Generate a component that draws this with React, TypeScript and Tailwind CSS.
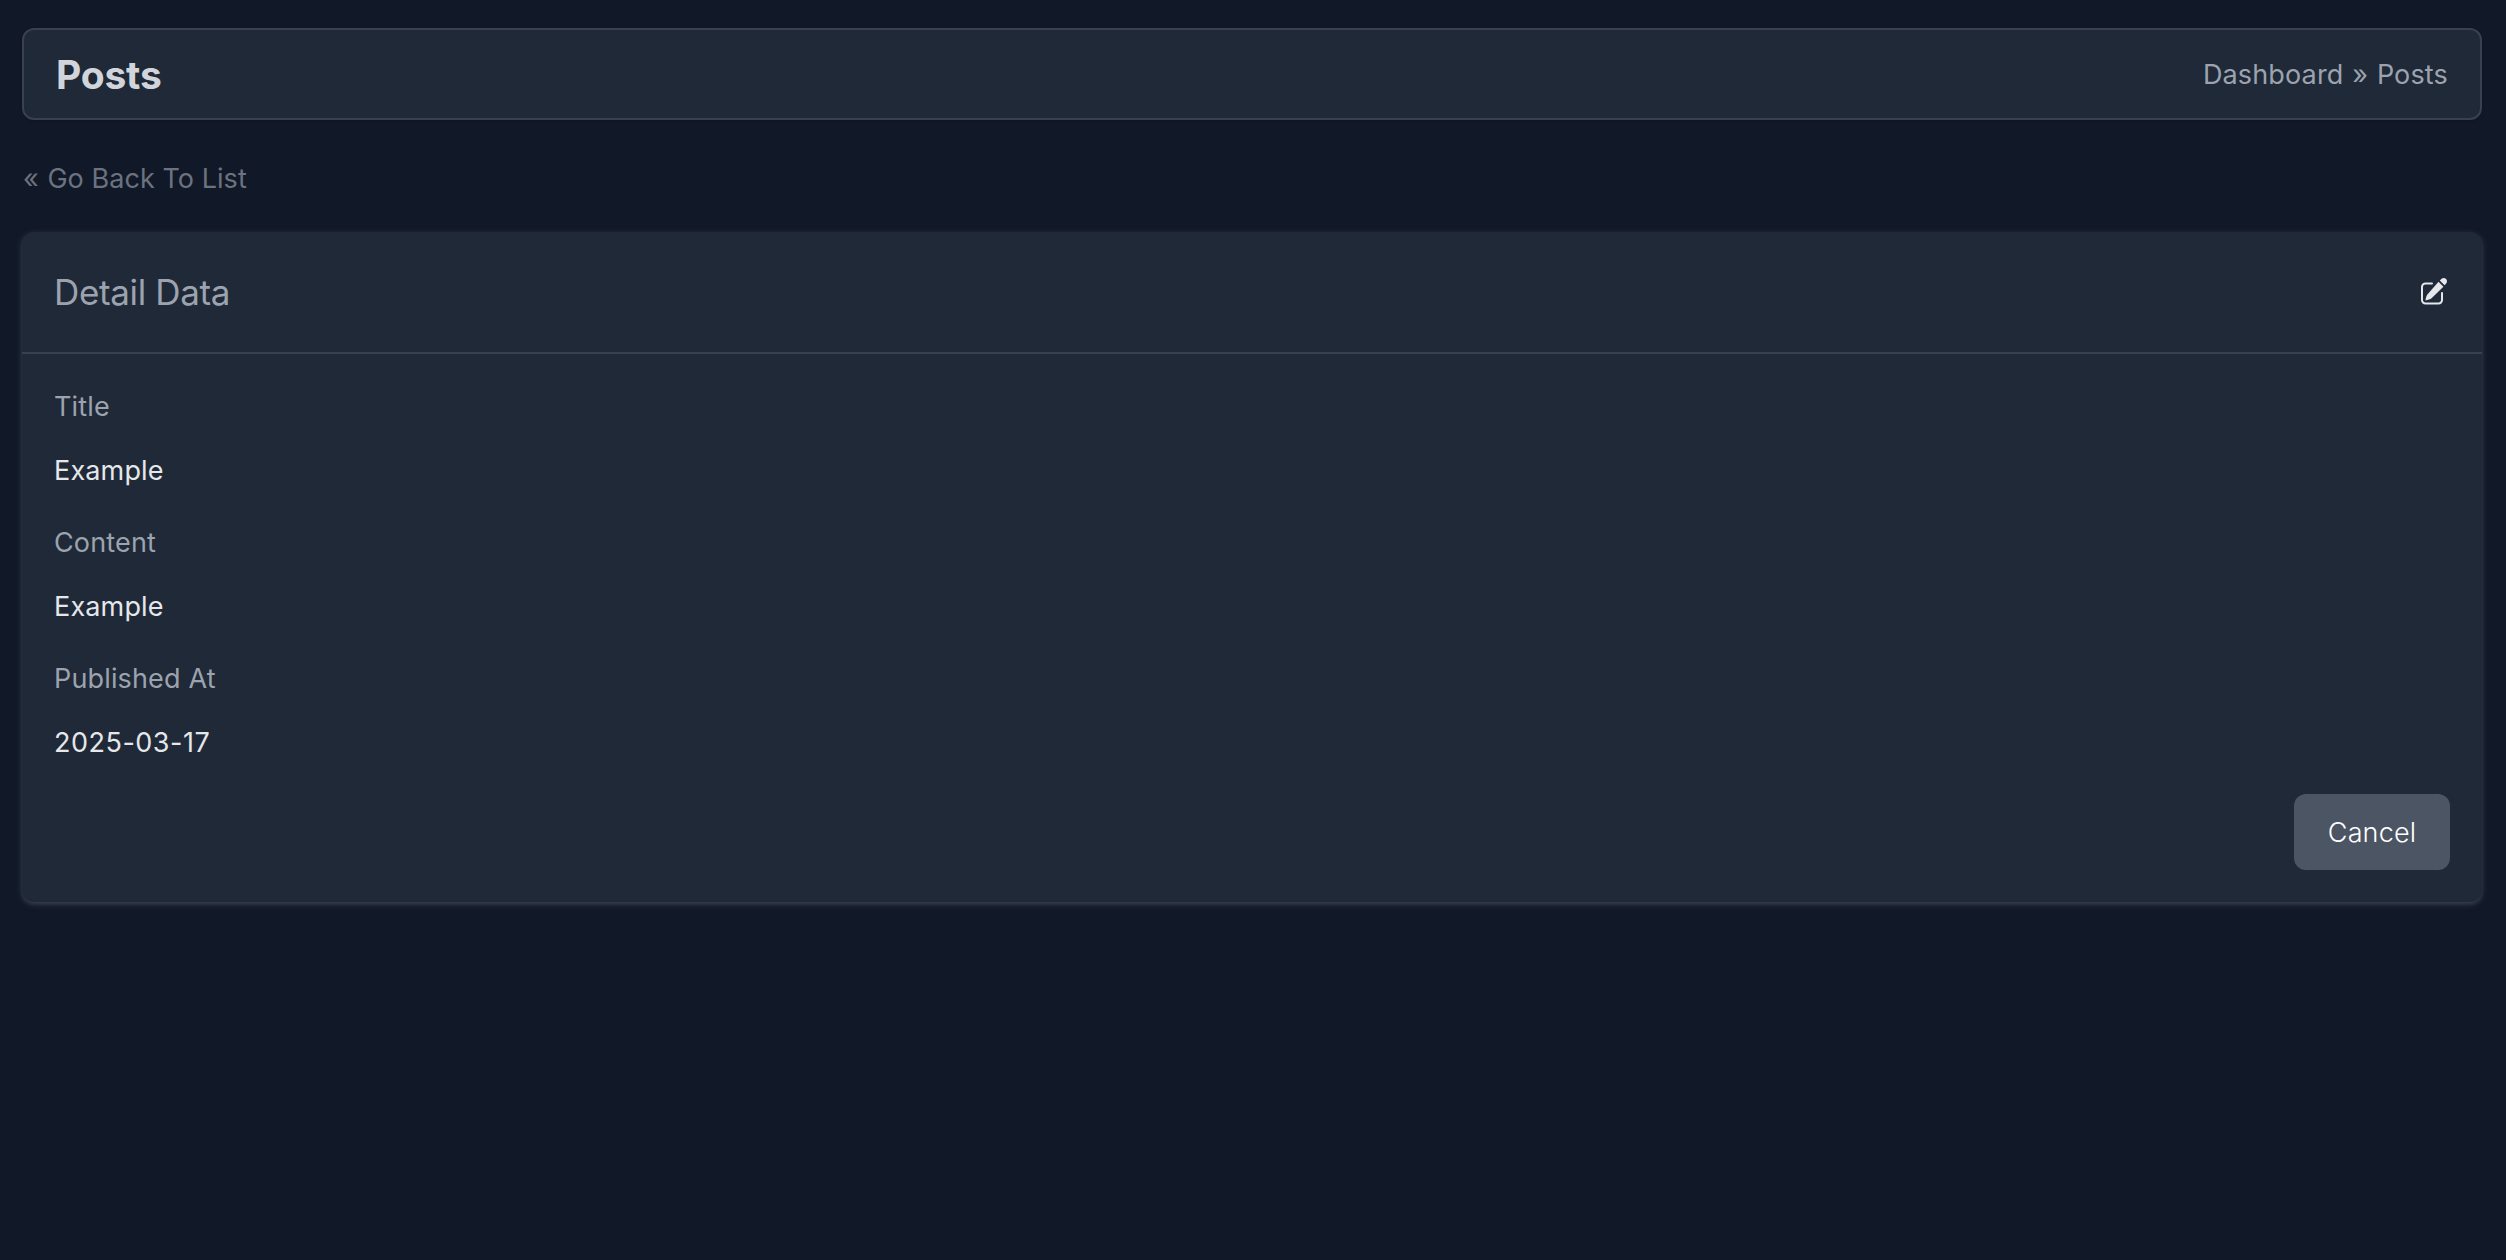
type DetailFieldProps = {
  label: string;
  value: string;
  numeric?: boolean;
};

const fields: DetailFieldProps[] = [
  { label: "Title", value: "Example" },
  { label: "Content", value: "Example" },
  { label: "Published At", value: "2025-03-17", numeric: true },
];

export default function App() {
  return (
    <div className="min-h-screen bg-[#111827] pt-7 pr-6 pl-[22px] font-['Inter',sans-serif] text-[27px] leading-10 tracking-[0.15px]">
      <header className="flex h-[92px] items-center justify-between rounded-xl border-2 border-[#374151] bg-[#1f2937] px-8 pt-0.5 shadow-sm">
        <h1 className="text-[39px] font-bold tracking-[-0.2px] text-[#d1d5db]">Posts</h1>
        <nav className="text-[#9ca3af]">
          <a href="#">Dashboard</a> <span className="mx-px">»</span> <a href="#">Posts</a>
        </nav>
      </header>

      <a href="#" className="mt-[39px] block w-fit pl-px tracking-[0.05px] text-[#6b7280]">
        <span className="mr-px">«</span> Go Back To List
      </a>

      <section className="mt-[33px] h-[670px] rounded-xl bg-[#1f2937] shadow-[0_2px_6px_0_#374151,0_2px_4px_-2px_#374151]">
        <div className="flex h-[122px] items-center justify-between border-b-2 border-[#374151] px-8">
          <h2 className="text-[35px] tracking-[-0.35px] text-[#9ca3af]">Detail Data</h2>
          <a href="#" aria-label="Edit" className="mr-0.5">
            <EditIcon />
          </a>
        </div>
        <div className="px-8 pt-[33px]">
          <dl className="space-y-8">
            {fields.map((field) => (
              <DetailField key={field.label} {...field} />
            ))}
          </dl>
          <div className="mt-[31px] flex justify-end">
            <button className="h-[76px] w-[156px] rounded-xl bg-[#4b5563] pt-0.5 font-light text-white">
              Cancel
            </button>
          </div>
        </div>
      </section>
    </div>
  );
}

function DetailField({ label, value, numeric }: DetailFieldProps) {
  return (
    <div>
      <dt className="text-[#9ca3af]">{label}</dt>
      <dd className={`mt-6 text-[#e5e7eb] ${numeric ? "tracking-[0.5px]" : ""}`}>{value}</dd>
    </div>
  );
}

function EditIcon() {
  return (
    <svg width="28" height="28" viewBox="0 0 28 28" fill="none" className="text-[#e5e7eb]">
      <path
        d="M12 5.500H5.500A3.500 3.500 0 0 0 2 9v13a3.500 3.500 0 0 0 3.500 3.500h13A3.500 3.500 0 0 0 22 22v-7"
        stroke="currentColor"
        strokeWidth="2"
        strokeLinecap="round"
      />
      <path
        d="M18.500 3.800l4.900 4.900L11.800 20c-1.700 1.300-3.700 2.100-6.300 2.500.2-2.900 1-5.100 2.500-6.800z"
        fill="currentColor"
      />
      <path
        d="M19.800 2.500l1.500-1.400c1.500-1.400 3.600-1.200 4.800 0 1.200 1.200 1.300 3.200-.1 4.600l-1.500 1.600z"
        fill="currentColor"
      />
    </svg>
  );
}
